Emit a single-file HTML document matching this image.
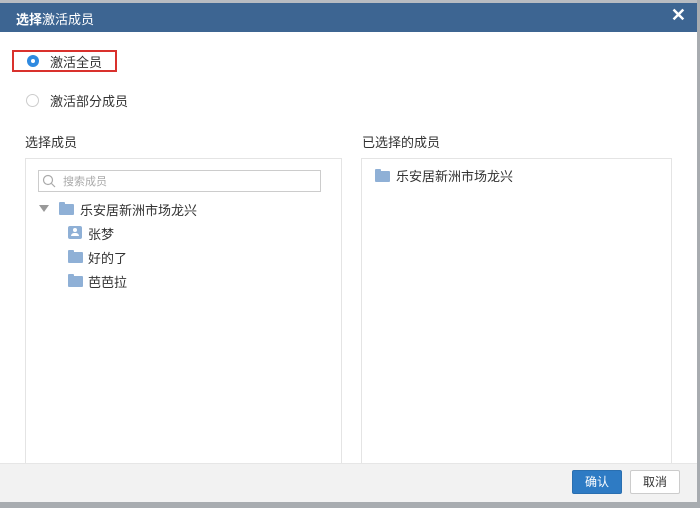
<!DOCTYPE html>
<html><head><meta charset="utf-8"><style>
*{margin:0;padding:0;box-sizing:border-box}
body{width:700px;height:508px;background:#fff;font-family:"Liberation Sans","Noto Sans CJK SC",sans-serif;position:relative;overflow:hidden;color:#333}
.a{position:absolute}
.hdr{left:0;top:0;width:700px;height:32px;background:#3d6592;border-top:3px solid #b8bcc2}
.hdr span{position:absolute;left:16px;top:6px;color:#fff;font-size:13px}
.x{right:14px;top:5px;color:#fff;font-size:18px;font-weight:bold}
.t{font-size:13px;color:#333}
.panel{border:1px solid #e4e4e4;background:#fff}
.fold{width:15px;height:11px;background:#8fb0d6;border-radius:1px}
.fold:before{content:"";position:absolute;left:0;top:-2px;width:6px;height:3px;background:#8fb0d6;border-radius:1px 1px 0 0}
.btn{font-size:12px;text-align:center;line-height:22px;height:24px;width:50px;border-radius:2px}
</style></head><body>
<div class="a hdr"><span><b>选择</b>激活成员</span></div>
<div class="a x">✕</div>
<div class="a" style="left:12px;top:50px;width:105px;height:22px;border:2px solid #d9312d"></div>
<div class="a" style="left:27px;top:55px;width:12px;height:12px;border-radius:50%;background:#2f8ae0"><div class="a" style="left:4px;top:4px;width:4px;height:4px;border-radius:50%;background:#fff"></div></div>
<div class="a t" style="left:50px;top:52px">激活全员</div>
<div class="a" style="left:26px;top:94px;width:13px;height:13px;border-radius:50%;border:1px solid #ccc"></div>
<div class="a t" style="left:50px;top:91px">激活部分成员</div>
<div class="a t" style="left:25px;top:132px">选择成员</div>
<div class="a t" style="left:362px;top:132px">已选择的成员</div>
<div class="a panel" style="left:25px;top:158px;width:317px;height:310px"></div>
<div class="a panel" style="left:361px;top:158px;width:311px;height:310px"></div>
<div class="a" style="left:38px;top:170px;width:283px;height:22px;border:1px solid #ccc"></div>
<svg class="a" style="left:42px;top:174px" width="14" height="14"><circle cx="6" cy="6" r="4.5" fill="none" stroke="#aaa" stroke-width="1.2"/><line x1="9.5" y1="9.5" x2="13" y2="13" stroke="#aaa" stroke-width="1.2"/></svg>
<div class="a" style="left:63px;top:173px;font-size:11px;color:#aaa">搜索成员</div>
<div class="a" style="left:39px;top:205px;width:0;height:0;border-left:5px solid transparent;border-right:5px solid transparent;border-top:7px solid #999"></div>
<div class="a fold" style="left:59px;top:204px"></div>
<div class="a t" style="left:80px;top:200px">乐安居新洲市场龙兴</div>
<div class="a" style="left:68px;top:226px;width:14px;height:13px;background:#8fb0d6;border-radius:2px"><div class="a" style="left:5px;top:2px;width:4px;height:4px;border-radius:50%;background:#fff"></div><div class="a" style="left:3px;top:7px;width:8px;height:3px;background:#fff;border-radius:3px 3px 0 0"></div></div>
<div class="a t" style="left:88px;top:224px">张梦</div>
<div class="a fold" style="left:68px;top:252px"></div>
<div class="a t" style="left:88px;top:248px">好的了</div>
<div class="a fold" style="left:68px;top:276px"></div>
<div class="a t" style="left:88px;top:272px">芭芭拉</div>
<div class="a fold" style="left:375px;top:171px"></div>
<div class="a t" style="left:396px;top:166px">乐安居新洲市场龙兴</div>
<div class="a" style="left:0;top:463px;width:700px;height:40px;background:#f2f2f2;border-top:1px solid #e6e6e6"></div>
<div class="a" style="left:0;top:502px;width:700px;height:6px;background:#a8acb0"></div>
<div class="a" style="left:697px;top:0;width:3px;height:508px;background:#a8acb0"></div>
<div class="a btn" style="left:572px;top:470px;background:#2e7bc4;color:#fff;border:1px solid #2a6fb0">确认</div>
<div class="a btn" style="left:630px;top:470px;background:#fff;color:#333;border:1px solid #ccc">取消</div>
</body></html>
